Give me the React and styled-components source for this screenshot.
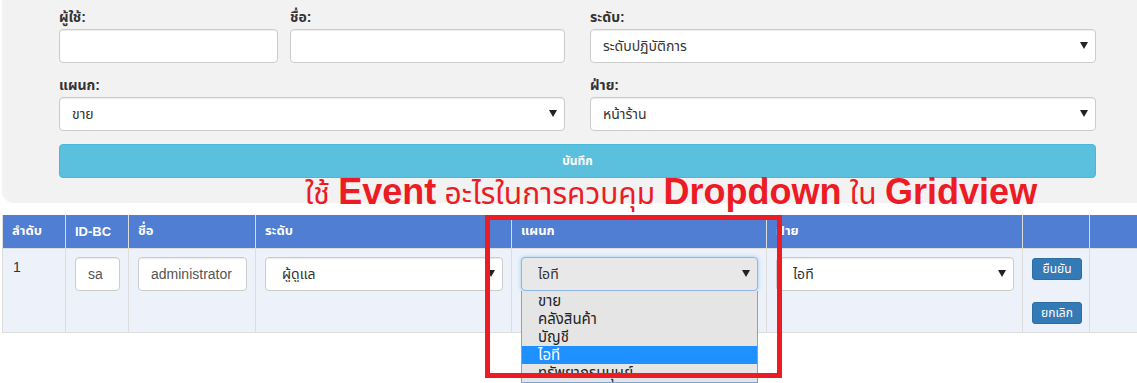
import styled, { createGlobalStyle } from "styled-components";

const GlobalStyle = createGlobalStyle`
    html, body {
        margin: 0;
        padding: 0;
        background: #ffffff;
        overflow: hidden;
    }
    body {
        font-family: "Liberation Sans", "Noto Sans Thai", "Noto Sans", sans-serif;
        font-size: 14px;
        color: #333333;
    }
`;

const Page = styled.div`
    position: relative;
    width: 1137px;
    height: 383px;
    overflow: hidden;
`;

const Panel = styled.div`
    margin-left: 2px;
    width: 1160px;
    box-sizing: border-box;
    background: #f2f2f2;
    border-radius: 0 0 12px 12px;
    padding: 7px 0 25px 57px;
`;

const FormGrid = styled.div`
    display: grid;
    grid-template-columns: 506px 506px;
    column-gap: 25px;
    row-gap: 12px;
`;

const SplitCell = styled.div`
    display: grid;
    grid-template-columns: 219px 275px;
    column-gap: 12px;
`;

const Field = styled.div`
    display: flex;
    flex-direction: column;
`;

const Label = styled.label`
    font-weight: bold;
    font-size: 14px;
    line-height: 20px;
    margin-bottom: 2px;
    color: #333333;
`;

const Input = styled.input`
    box-sizing: border-box;
    width: 100%;
    height: 34px;
    padding: 6px ${({ $pad }) => $pad || 12}px;
    border: 1px solid #cccccc;
    border-radius: 4px;
    background: #ffffff;
    font-family: inherit;
    font-size: 14px;
    color: #555555;
    box-shadow: inset 0 1px 1px rgba(0, 0, 0, 0.075);
    outline: none;
`;

const SelectWrap = styled.div`
    position: relative;
    width: 100%;
`;

const Select = styled.select`
    box-sizing: border-box;
    width: 100%;
    height: 34px;
    padding: 6px 24px 6px ${({ $pad }) => $pad || 12}px;
    appearance: none;
    -webkit-appearance: none;
    border: 1px solid ${({ $focus }) => ($focus ? "#8fb4e6" : "#cccccc")};
    border-radius: 4px;
    background: ${({ $focus }) => ($focus ? "#e8e8e8" : "#ffffff")};
    font-family: inherit;
    font-size: 14px;
    color: #333333;
    box-shadow: ${({ $focus }) =>
        $focus
            ? "0 0 4px rgba(102, 175, 233, 0.6)"
            : "inset 0 1px 1px rgba(0, 0, 0, 0.075)"};
    outline: none;
`;

const Arrow = styled.span`
    position: absolute;
    right: 8px;
    top: 13px;
    width: 0;
    height: 0;
    border-left: 4px solid transparent;
    border-right: 4px solid transparent;
    border-top: 7px solid #222222;
    pointer-events: none;
`;

const SaveButton = styled.button`
    margin-top: 13px;
    width: 1037px;
    height: 34px;
    border: 1px solid #46b8da;
    border-radius: 4px;
    background: #5bc0de;
    color: #ffffff;
    font-family: inherit;
    font-size: 12px;
    font-weight: bold;
`;

const Table = styled.table`
    margin: 12px 0 0 2px;
    width: 1160px;
    border-collapse: collapse;
    table-layout: fixed;
`;

const Th = styled.th`
    height: 33px;
    box-sizing: border-box;
    padding: 0 9px;
    background: #507ed2;
    border: 1px solid #dddddd;
    border-top: none;
    color: #ffffff;
    font-size: 13px;
    font-weight: bold;
    text-align: left;
`;

const Td = styled.td`
    height: 83px;
    box-sizing: border-box;
    padding: 8px 8px 8px 9px;
    background: #edf2fa;
    border: 1px solid #dddddd;
    vertical-align: top;
    font-size: 14px;
    color: #333333;
`;

const RowNumber = styled.div`
    padding-top: 2px;
    padding-left: 1px;
`;

const ActionStack = styled.div`
    display: flex;
    flex-direction: column;
    align-items: flex-start;
    gap: 22px;
    padding-top: 1px;
`;

const SmallButton = styled.button`
    width: 50px;
    height: 22px;
    padding: 0;
    border: 1px solid #2e6da4;
    border-radius: 3px;
    background: #337ab7;
    color: #ffffff;
    font-family: inherit;
    font-size: 12px;
`;

const OptionList = styled.ul`
    position: absolute;
    top: 34px;
    left: 0;
    right: 0;
    margin: 0;
    padding: 1px 0 0;
    list-style: none;
    background: #e5e5e5;
    border: 1px solid #7fa3d6;
    border-top: none;
    z-index: 2;
`;

const Option = styled.li`
    height: 18px;
    line-height: 18px;
    padding-left: 16px;
    font-size: 15px;
    color: ${({ $active }) => ($active ? "#ffffff" : "#222222")};
    background: ${({ $active }) => ($active ? "#1e90ff" : "transparent")};
    white-space: nowrap;
`;

const Annotation = styled.div`
    position: absolute;
    left: 305px;
    top: 172px;
    color: #ed1c24;
    font-size: 30px;
    line-height: 40px;
    white-space: nowrap;
    z-index: 3;
`;

const Strong = styled.span`
    font-family: "Liberation Sans", Arial, sans-serif;
    font-size: 36px;
    font-weight: bold;
`;

const Highlight = styled.div`
    position: absolute;
    left: 485px;
    top: 215px;
    width: 297px;
    height: 163px;
    box-sizing: border-box;
    border: 5px solid #ed1c24;
    z-index: 4;
`;

function Dropdown({ value, options, pad, focus, open }) {
    return (
        <SelectWrap>
            <Select value={value} $pad={pad} $focus={focus} onChange={() => {}}>
                {options.map((o) => (
                    <option key={o} value={o}>
                        {o}
                    </option>
                ))}
            </Select>
            <Arrow />
            {open && (
                <OptionList>
                    {options.map((o) => (
                        <Option key={o} $active={o === value}>
                            {o}
                        </Option>
                    ))}
                </OptionList>
            )}
        </SelectWrap>
    );
}

const departments = ["ขาย", "คลังสินค้า", "บัญชี", "ไอที", "ทรัพยากรมนุษย์"];
const levels = ["ระดับปฏิบัติการ", "ผู้ดูแล"];
const sections = ["หน้าร้าน", "ไอที"];

export default function App() {
    return (
        <Page>
            <GlobalStyle />
            <Panel>
                <FormGrid>
                    <SplitCell>
                        <Field>
                            <Label>ผู้ใช้:</Label>
                            <Input type="text" />
                        </Field>
                        <Field>
                            <Label>ชื่อ:</Label>
                            <Input type="text" />
                        </Field>
                    </SplitCell>
                    <Field>
                        <Label>ระดับ:</Label>
                        <Dropdown value="ระดับปฏิบัติการ" options={levels} />
                    </Field>
                    <Field>
                        <Label>แผนก:</Label>
                        <Dropdown value="ขาย" options={departments} />
                    </Field>
                    <Field>
                        <Label>ฝ่าย:</Label>
                        <Dropdown value="หน้าร้าน" options={sections} />
                    </Field>
                </FormGrid>
                <SaveButton>บันทึก</SaveButton>
            </Panel>

            <Table>
                <colgroup>
                    <col style={{ width: 63 }} />
                    <col style={{ width: 63 }} />
                    <col style={{ width: 127 }} />
                    <col style={{ width: 256 }} />
                    <col style={{ width: 255 }} />
                    <col style={{ width: 256 }} />
                    <col style={{ width: 67 }} />
                    <col />
                </colgroup>
                <thead>
                    <tr>
                        <Th>ลำดับ</Th>
                        <Th>ID-BC</Th>
                        <Th>ชื่อ</Th>
                        <Th>ระดับ</Th>
                        <Th>แผนก</Th>
                        <Th>ฝ่าย</Th>
                        <Th />
                        <Th />
                    </tr>
                </thead>
                <tbody>
                    <tr>
                        <Td>
                            <RowNumber>1</RowNumber>
                        </Td>
                        <Td>
                            <Input type="text" defaultValue="sa" $pad={12} />
                        </Td>
                        <Td>
                            <Input type="text" defaultValue="administrator" $pad={12} />
                        </Td>
                        <Td>
                            <Dropdown value="ผู้ดูแล" options={levels} pad={16} />
                        </Td>
                        <Td>
                            <Dropdown value="ไอที" options={departments} pad={16} focus open />
                        </Td>
                        <Td>
                            <Dropdown value="ไอที" options={sections} pad={16} />
                        </Td>
                        <Td>
                            <ActionStack>
                                <SmallButton>ยืนยัน</SmallButton>
                                <SmallButton>ยกเลิก</SmallButton>
                            </ActionStack>
                        </Td>
                        <Td />
                    </tr>
                </tbody>
            </Table>

            <Annotation>
                ใช้ <Strong>Event</Strong> อะไรในการควบคุม <Strong>Dropdown</Strong> ใน{" "}
                <Strong>Gridview</Strong>
            </Annotation>
            <Highlight />
        </Page>
    );
}
